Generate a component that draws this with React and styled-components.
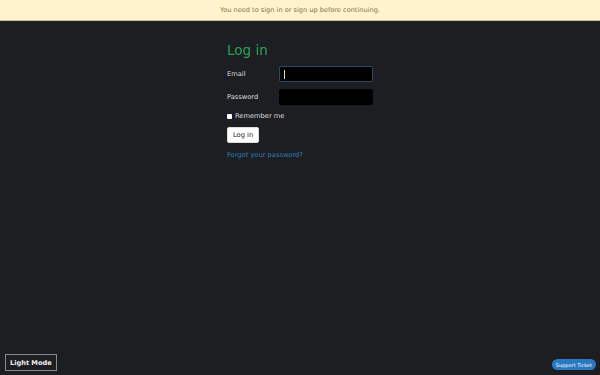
import React from "react";
import styled, { createGlobalStyle } from "styled-components";

const Global = createGlobalStyle`
  html, body { margin: 0; padding: 0; background: #1c1e21; }
  body { font-family: "DejaVu Sans", sans-serif; color: #dcdcdc; height: 375px; overflow: hidden; }
`;

const Page = styled.div`
  position: relative;
  width: 600px;
  height: 375px;
  background: #1c1e21;
`;

const Notice = styled.div`
  height: 21px;
  background: #fff3cd;
  border-bottom: 1px solid #c9bf99;
  color: #857043;
  font-size: 6.6px;
  display: flex;
  align-items: center;
  justify-content: center;
  box-sizing: border-box;
`;

const Main = styled.main`
  width: 146px;
  margin: 0 auto;
  padding-top: 20px;
`;

const Title = styled.h2`
  margin: 0 0 7px;
  color: #2e9e56;
  font-weight: 400;
  font-size: 13.5px;
  line-height: 18px;
`;

const Field = styled.div`
  display: flex;
  align-items: center;
  justify-content: space-between;
  margin-bottom: 7px;
`;

const Label = styled.label`
  font-size: 6.7px;
  color: #dcdcdc;
`;

const Check = styled.label`
  display: flex;
  align-items: center;
  gap: 3px;
  font-size: 6.7px;
  color: #dcdcdc;
  margin: 3px 0 2px;
`;

const Box = styled.span`
  width: 5px;
  height: 5px;
  background: #fff;
  border-radius: 1px;
`;

const Button = styled.button`
  background: #fff;
  color: #111;
  border: 1px solid #ddd;
  border-radius: 2px;
  font-family: inherit;
  font-size: 6.7px;
  height: 16px;
  padding: 0 5px;
`;

const Link = styled.a`
  display: block;
  margin-top: 8px;
  color: #2f7fb7;
  font-size: 6.7px;
  text-decoration: none;
`;

const Caret = styled.span`
  display: inline-block;
  width: 1px;
  height: 9px;
  background: #ddd;
`;

const FakeInput = styled.div`
  width: 94px;
  height: 16px;
  box-sizing: border-box;
  background: #000;
  border: 1px solid ${(p) => (p.$focus ? "#2b4866" : "#000")};
  border-radius: 2px;
  display: flex;
  align-items: center;
  padding-left: 4px;
`;

const ModeButton = styled.button`
  position: absolute;
  left: 5px;
  bottom: 4px;
  height: 17px;
  padding: 0 4px;
  background: #1c1e21;
  border: 1px solid #8a8a8a;
  color: #f0f0f0;
  font-family: inherit;
  font-weight: 700;
  font-size: 6.6px;
`;

const Support = styled.button`
  position: absolute;
  right: 4px;
  bottom: 5px;
  height: 11px;
  padding: 0 4px;
  background: #2a78c0;
  color: #fff;
  border: none;
  border-radius: 6px;
  font-family: inherit;
  font-size: 5px;
`;

export default function App() {
  return (
    <Page>
      <Global />
      <Notice>You need to sign in or sign up before continuing.</Notice>
      <Main>
        <Title>Log in</Title>
        <Field>
          <Label>Email</Label>
          <FakeInput $focus>
            <Caret />
          </FakeInput>
        </Field>
        <Field>
          <Label>Password</Label>
          <FakeInput />
        </Field>
        <Check>
          <Box />
          Remember me
        </Check>
        <Button>Log in</Button>
        <Link href="#">Forgot your password?</Link>
      </Main>
      <ModeButton>Light Mode</ModeButton>
      <Support>Support Ticket</Support>
    </Page>
  );
}
